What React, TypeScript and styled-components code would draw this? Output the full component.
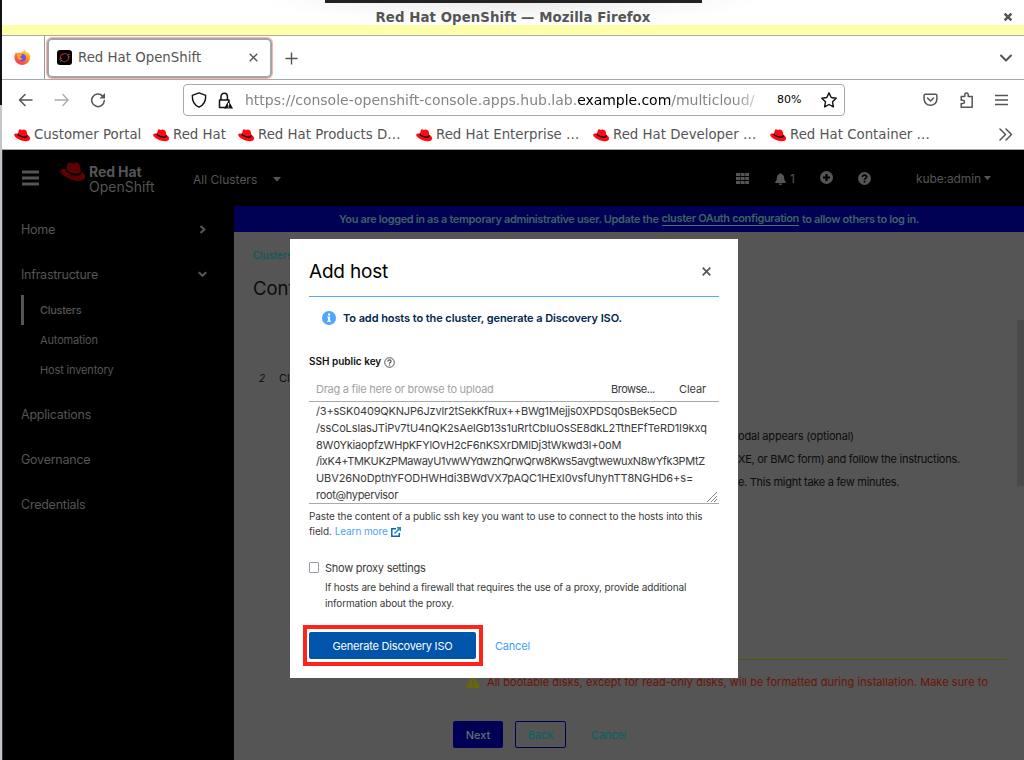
import React from 'react';
import styled, { createGlobalStyle, css } from 'styled-components';

const GlobalStyle = createGlobalStyle`
  *, *::before, *::after { box-sizing: border-box; }
  body { margin: 0; background: #fff; overflow: hidden; }
  svg { display: block; flex: none; }
`;

const chromeFont = '"DejaVu Sans", sans-serif';
const consoleFont = 'Inter, "Liberation Sans", sans-serif';
const dim = '#555';

/* ---------- desktop and window ---------- */

const Desktop = styled.div`
  position: relative;
  display: flex;
  width: 1024px;
  height: 760px;
  overflow: hidden;
  font-family: ${consoleFont};
`;
const DesktopEdge = styled.div`
  width: 2px;
  flex: none;
  background: linear-gradient(#101214 0 105px, #c4c8ca 105px 760px);
`;
const Window = styled.div`
  flex: 1;
  min-width: 0;
  display: flex;
  flex-direction: column;
`;
const DockShade = styled.div`
  position: absolute;
  left: 325px;
  top: 0;
  width: 377px;
  height: 3px;
  background: #222;
`;

/* ---------- browser chrome ---------- */

const TitleBar = styled.header`
  height: 36px;
  flex: none;
  display: flex;
  align-items: flex-start;
  padding: 8px 12px 0 20px;
  border-bottom: 1px solid #aaa;
  background:
    linear-gradient(#ffffaa, #ffffaa) 0 25px / 100% 10px no-repeat,
    radial-gradient(ellipse 250px 24px at 50% 0, #eaeaea, #fff) 0 0 / 100% 25px no-repeat;
  font: bold 13.33px/19px ${chromeFont};
  color: #555;
`;
const WindowTitle = styled.span`
  flex: 1;
  text-align: center;
  letter-spacing: 0.06px;
  white-space: nowrap;
`;
const CloseWindow = styled.div`
  padding-top: 5px;
`;

const TabBar = styled.nav`
  height: 44px;
  flex: none;
  display: flex;
  align-items: center;
  padding-right: 11px;
  border-bottom: 1px solid #aaa;
  background: #fff;
  font: 13.33px/20px ${chromeFont};
  color: #555;
`;
const PinnedTab = styled.div`
  width: 43px;
  height: 43px;
  display: flex;
  align-items: center;
  padding-left: 12px;
  border-right: 1px solid #999;
`;
const Tab = styled.div`
  width: 225px;
  height: 40px;
  margin-left: 2px;
  padding: 0 12px 0 8px;
  display: flex;
  align-items: center;
  border: 2px solid #a4a4a4;
  border-radius: 5px;
  box-shadow: 0 0 0 1px #fcb3ab;
`;
const TabLabel = styled.span`
  flex: 1;
  padding: 1px 0 0 6px;
  white-space: nowrap;
`;
const NewTab = styled.div`
  flex: 1;
  padding: 1px 0 0 13px;
`;

const Toolbar = styled.div`
  height: 40px;
  flex: none;
  display: flex;
  align-items: center;
  padding: 0 16px;
  background: #fff;
`;
const NavButtons = styled.div`
  width: 165px;
  display: flex;
  align-items: center;
  gap: 20px;
`;
const UrlBar = styled.div`
  width: 662px;
  height: 32px;
  display: flex;
  align-items: center;
  padding: 0 7px;
  border: 1px solid #aaa;
  border-radius: 4px;
  font: 14px/20px ${chromeFont};
  color: #858585;
`;
const Url = styled.span`
  width: 524px;
  padding-left: 12px;
  overflow: hidden;
  white-space: nowrap;
  mask-image: linear-gradient(90deg, #000 500px, #0006 522px);
`;
const Domain = styled.span`
  color: #000;
  letter-spacing: -0.05px;
`;
const Zoom = styled.span`
  width: 64px;
  padding-left: 20px;
  font-size: 11px;
  color: #000;
`;
const ToolbarIcons = styled.div`
  flex: 1;
  display: flex;
  justify-content: flex-end;
  align-items: center;
  gap: 21px;
`;

const Bookmarks = styled.div`
  height: 30px;
  flex: none;
  display: flex;
  align-items: center;
  padding: 0 11px 0 12px;
  border-bottom: 1px solid #aaa;
  background: #fff;
  color: #555;
  font: 13.33px/20px ${chromeFont};
`;
const Bookmark = styled.span<{ $w: number }>`
  width: ${p => p.$w}px;
  flex: none;
  display: flex;
  align-items: center;
  gap: 4px;
  white-space: nowrap;
`;
const BookmarkIcon = styled.span`
  padding-top: 2px;
`;
const Overflow = styled.span`
  flex: 1;
  display: flex;
  justify-content: flex-end;
`;

/* ---------- console ---------- */

const Console = styled.div`
  flex: 1;
  display: flex;
  flex-direction: column;
  background: #000;
  border-left: 1px solid #2c3236;
  color: ${dim};
`;
const Masthead = styled.header`
  height: 56px;
  flex: none;
  display: flex;
  align-items: center;
  padding: 0 33px 0 19px;
  font-size: 12px;
  white-space: nowrap;
`;
const Brand = styled.div`
  width: 154px;
  display: flex;
  align-items: flex-start;
  padding-left: 21px;
  gap: 4px;
`;
const BrandName = styled.div`
  padding-top: 3px;
  font-size: 14px;
  line-height: 14.5px;
`;
const BrandStrong = styled.div`
  font-weight: 700;
  letter-spacing: -0.1px;
`;
const ClusterSelect = styled.div`
  flex: 1;
  display: flex;
  align-items: center;
  gap: 16px;
  padding-top: 2px;
`;
const HeaderTools = styled.div`
  display: flex;
  align-items: center;
  padding-top: 1px;
`;
const HeaderTool = styled.div<{ $w: number; $up?: boolean }>`
  width: ${p => p.$w}px;
  display: flex;
  align-items: center;
  gap: 4px;
  padding-bottom: ${p => (p.$up ? 2 : 0)}px;
`;
const UserMenu = styled.div`
  display: flex;
  align-items: center;
  gap: 3px;
  letter-spacing: -0.1px;
`;

const Body = styled.div`
  flex: 1;
  min-height: 0;
  display: flex;
`;
const Sidebar = styled.nav`
  width: 231px;
  flex: none;
  padding-left: 18px;
  display: flex;
  flex-direction: column;
`;
const NavItem = styled.div`
  height: 45px;
  flex: none;
  display: flex;
  align-items: center;
  justify-content: space-between;
  padding: 1px 27px 0 0;
  font-size: 12.5px;
  letter-spacing: -0.24px;
`;
const SubNav = styled.div`
  display: flex;
  flex-direction: column;
  margin-top: -1px;
  padding: 0 0 6px;
`;
const SubItem = styled.div<{ $active?: boolean }>`
  height: 30px;
  display: flex;
  align-items: center;
  padding-left: 16px;
  border-left: 3px solid ${p => (p.$active ? dim : 'transparent')};
  font-size: 11px;
  letter-spacing: -0.15px;
  ${p => p.$active && css`font-weight: 500; letter-spacing: -0.3px;`}
`;

const Main = styled.main`
  flex: 1;
  min-width: 0;
  display: flex;
  flex-direction: column;
`;
const Banner = styled.div`
  height: 26px;
  flex: none;
  display: flex;
  justify-content: center;
  align-items: center;
  gap: 3px;
  background: #000055;
  color: #3e6262;
  font-weight: 600;
  font-size: 11px;
  letter-spacing: -0.36px;
  white-space: nowrap;
`;
const BannerLink = styled.span`
  border-bottom: 1px solid #5b6a6a;
  line-height: 13px;
`;
const Page = styled.div`
  flex: 1;
  display: flex;
  justify-content: space-between;
  background: #555;
  color: #0c0c0c;
  white-space: nowrap;
`;
const PageContent = styled.div`
  flex: 1;
  padding: 15px 10px 0 19px;
  display: flex;
  flex-direction: column;
`;
const Crumb = styled.div`
  font-size: 10px;
  line-height: 16px;
  color: #005a5a;
`;
const Heading = styled.div`
  padding-top: 14px;
  font-size: 18.5px;
  line-height: 22px;
`;
const Step = styled.div`
  display: flex;
  gap: 14px;
  padding: 70px 0 0 6px;
  font-size: 11px;
  line-height: 18px;
`;
const StepNumber = styled.span`
  width: 6px;
  font-style: italic;
  font-size: 10px;
`;
const Instructions = styled.div`
  padding: 38px 0 0 485px;
  display: flex;
  flex-direction: column;
  font-size: 11px;
  line-height: 23px;
`;
const Instruction = styled.span<{ $ls: number }>`
  letter-spacing: ${p => p.$ls}px;
`;
const Warning = styled.div`
  width: 541px;
  height: 44px;
  margin: 165px 0 0 213px;
  display: flex;
  align-items: center;
  gap: 7px;
  border-top: 1px solid #555500;
  font-size: 11px;
  letter-spacing: 0.05px;
  color: #6b1405;
`;
const WizardFooter = styled.div`
  display: flex;
  align-items: center;
  padding: 18px 0 0 200px;
  gap: 12px;
  color: #006464;
  font-size: 11px;
`;
const WizardButton = styled.div<{ $kind: 'primary' | 'outline' | 'link' }>`
  height: 27px;
  display: flex;
  align-items: center;
  justify-content: center;
  border-radius: 2px;
  width: ${p => (p.$kind === 'link' ? 61 : p.$kind === 'primary' ? 50 : 51)}px;
  ${p => p.$kind === 'primary' && css`background: #000055; color: #5f7272; font-weight: 500;`}
  ${p => p.$kind === 'outline' && css`border: 1px solid #000055;`}
  ${p => p.$kind === 'link' && css`letter-spacing: -0.2px;`}
`;
const ScrollThumb = styled.div`
  width: 7px;
  height: 166px;
  margin-top: 88px;
  background: #4a4a4a;
`;

/* ---------- add host dialog ---------- */

const Dialog = styled.section`
  position: absolute;
  left: 290px;
  top: 239px;
  width: 448px;
  height: 439px;
  padding: 0 19px;
  display: flex;
  flex-direction: column;
  background: #fff;
  color: #3a3a3a;
  font-size: 11px;
  white-space: nowrap;
`;
const DialogHeader = styled.div`
  height: 57px;
  flex: none;
  display: flex;
  align-items: center;
  justify-content: space-between;
  padding: 8px 8px 0 0;
`;
const DialogTitle = styled.h1`
  margin: 0;
  font-size: 19px;
  font-weight: 400;
  letter-spacing: -0.2px;
  color: #000;
`;
const InfoAlert = styled.div`
  height: 43px;
  flex: none;
  display: flex;
  align-items: center;
  gap: 7px;
  padding: 0 0 1px 13px;
  border-top: 1px solid #55aaff;
  font-weight: 600;
  letter-spacing: -0.08px;
  color: #00264d;
`;
const FieldLabel = styled.div`
  height: 35px;
  flex: none;
  display: flex;
  align-items: flex-end;
  gap: 3px;
  padding-bottom: 6px;
  font-size: 10px;
  line-height: 14px;
  font-weight: 600;
  color: #111;
`;
const FileRow = styled.div`
  height: 27px;
  flex: none;
  display: flex;
  align-items: center;
  padding-left: 7px;
  padding-top: 2px;
`;
const FilePlaceholder = styled.span`
  flex: 1;
  color: #a2a2a2;
  letter-spacing: -0.25px;
`;
const FileButton = styled.span<{ $w: number; $ls?: number }>`
  width: ${p => p.$w}px;
  letter-spacing: ${p => p.$ls ?? -0.1}px;
`;
const KeyArea = styled.div`
  position: relative;
  height: 103px;
  flex: none;
  padding: 1px 0 0 7px;
  border-top: 1px solid #aaa;
  border-bottom: 1px solid #aaa;
  line-height: 16.8px;
`;
const KeyLine = styled.div<{ $ls: number }>`
  letter-spacing: ${p => p.$ls}px;
`;
const ResizeGrip = styled.div`
  position: absolute;
  right: 2px;
  bottom: 1px;
`;
const HelpText = styled.div`
  padding-top: 5px;
  font-size: 10px;
  line-height: 15px;
  letter-spacing: -0.11px;
`;
const HelpLine = styled.div`
  display: flex;
  align-items: center;
  gap: 3px;
`;
const Link = styled.span`
  color: #4a9fff;
`;
const ProxyOption = styled.div`
  display: flex;
  gap: 6px;
  padding-top: 21px;
`;
const Checkbox = styled.div`
  width: 10px;
  height: 11px;
  margin-top: 2px;
  flex: none;
  border: 1px solid #999aa8;
  border-radius: 1px;
`;
const ProxyLabel = styled.div`
  line-height: 17px;
  letter-spacing: -0.25px;
`;
const ProxyHelp = styled.div`
  padding-top: 2px;
  font-size: 10px;
  line-height: 16px;
  letter-spacing: -0.14px;
`;
const DialogFooter = styled.div`
  display: flex;
  align-items: center;
  margin: 14px 0 0 -6px;
`;
const Highlight = styled.div`
  width: 180px;
  height: 41px;
  padding: 3px 2px;
  border: 4px solid #ff2419;
`;
const PrimaryButton = styled.div`
  width: 167px;
  height: 27px;
  display: flex;
  align-items: center;
  justify-content: center;
  border-radius: 2px;
  background: #0055aa;
  color: #fff;
  letter-spacing: -0.2px;
`;
const CancelLink = styled.span`
  padding-left: 12px;
  color: #3f9bff;
  letter-spacing: -0.2px;
`;

/* ---------- drawings ---------- */

const Hat = ({ w = 16, fill = '#ff0a14', band = '#000' }: { w?: number; fill?: string; band?: string }) => (
  <svg width={w} height={w * 0.8} viewBox="0 0 25 20">
    <path fill={fill} d="M6.2 7.2 7.6 2C8 .6 9 .2 10.4.8l1.8.8c1 0 1.4-1 3.2-1 2.4 0 4 1.6 4.6 4l1 4.6c3 1.4 4.6 3.8 4 6.4-.6 3-4.6 4-9 3.2C8.4 17.4 1.6 13.2.4 9.6-.2 7.4 2.6 6.8 6.2 7.2Z" />
    <path fill="none" stroke={band} strokeWidth="2" d="M6 7.6c.6 2.6 6.6 5 10.4 5.2 3 .1 4.4-.8 4.2-3" />
  </svg>
);

const line = { fill: 'none', strokeLinecap: 'round', strokeLinejoin: 'round' } as const;

const Caret = ({ w = 8 }: { w?: number }) => (
  <svg width={w} height={w * 0.6} viewBox="0 0 10 6"><path fill={dim} d="M0 0h10L5 6Z" /></svg>
);

const Firefox = () => (
  <svg width="17" height="17" viewBox="0 0 17 17">
    <defs>
      <linearGradient id="flame" x1="0.8" y1="0" x2="0.2" y2="1">
        <stop offset="0" stopColor="#ffef45" /><stop offset=".45" stopColor="#ff8a2a" /><stop offset="1" stopColor="#f62a5a" />
      </linearGradient>
    </defs>
    <path fill="url(#flame)" d="M11 .5c.3 1.500 1.500 2.500 2.400 3.400l.5-.9c1.600 1.600 2.400 3.500 2.400 5.600a8 8 0 0 1-15.900.4C.2 6.600 1 4.600 2.300 3l.4 1.500C3.700 3.900 5 3.600 6.300 4 7.800 3.400 9.500 2.500 11 .5Z" />
    <circle cx="8.200" cy="8.800" r="3.700" fill="#7a4be0" />
    <path fill="#ffa62b" d="M2.800 4.600c2-.4 4 .1 5.600 1.500L6.500 7.300c-.5 1.600.8 2.600 2.500 1.900-1 2.500-5 2.200-5.400-.8Z" />
  </svg>
);

const Favicon = () => (
  <svg width="15" height="15" viewBox="0 0 15 15">
    <rect width="15" height="15" rx="3" fill="#000" />
    <g {...line} strokeWidth="1.100"><path stroke="#d01c26" d="M3.500 8.500A4.200 4.200 0 0 1 10.800 5" /><path stroke="#8f2026" d="M11.600 6.500A4.200 4.200 0 0 1 4.200 10" /></g>
    <path stroke="#888" strokeWidth=".8" d="m2.300 9.300 2.400-1M10.200 5.300l2.500-1M3 11.300l2-.9M10.500 7.300l2-.8" />
  </svg>
);

const X = ({ size = 9, stroke = '#555', sw = 1.3 }: { size?: number; stroke?: string; sw?: number }) => (
  <svg width={size} height={size} viewBox="0 0 9 9"><path {...line} strokeLinecap="butt" stroke={stroke} strokeWidth={sw} d="m.7.7 7.600 7.600M8.300.7.7 8.300" /></svg>
);

const bookmarks: [string, number][] = [
  ['Customer Portal', 139],
  ['Red Hat', 85],
  ['Red Hat Products D…', 178],
  ['Red Hat Enterprise …', 177],
  ['Red Hat Developer …', 177],
  ['Red Hat Container …', 165],
];

const Browser = () => (
  <>
    <TitleBar>
      <WindowTitle>Red Hat OpenShift — Mozilla Firefox</WindowTitle>
      <CloseWindow><X size={8} sw={2.8} /></CloseWindow>
    </TitleBar>
    <TabBar>
      <PinnedTab><Firefox /></PinnedTab>
      <Tab>
        <Favicon />
        <TabLabel>Red Hat OpenShift</TabLabel>
        <X />
      </Tab>
      <NewTab>
        <svg width="13" height="13" viewBox="0 0 13 13"><path stroke="#555" strokeWidth="1.400" d="M6.500.5v12M.5 6.500h12" /></svg>
      </NewTab>
      <svg width="14" height="8" viewBox="0 0 14 8"><path {...line} stroke="#555" strokeWidth="2" d="m2 1.500 5 5 5-5" /></svg>
    </TabBar>
    <Toolbar>
      <NavButtons>
        <svg width="16" height="14" viewBox="0 0 16 14"><path {...line} stroke="#555" strokeWidth="1.500" d="M14 7H1.500M7 1.500 1.500 7 7 12.500" /></svg>
        <svg width="16" height="14" viewBox="0 0 16 14"><path {...line} stroke="#aaa" strokeWidth="1.300" d="M1 7h13M9 1.500 14 7 9 12.500" /></svg>
        <svg width="16" height="16" viewBox="0 0 16 16"><path {...line} stroke="#555" strokeWidth="1.500" d="M14.300 8.500A6.300 6.300 0 1 1 12.600 4" /><path fill="#555" d="M15 1v5.500H9.500Z" /></svg>
      </NavButtons>
      <UrlBar>
        <svg width="16" height="16" viewBox="0 0 16 16"><path {...line} stroke="#111" strokeWidth="1.400" d="M8 .9 14.700 3.300c.2 5.500-1.700 9.800-6.700 11.900C3 13.100 1.100 8.800 1.300 3.300Z" /></svg>
        <svg width="26" height="17" viewBox="0 0 26 17">
          <path {...line} stroke="#111" strokeWidth="1.500" d="M18 15.500h-5.500V8h9.500v1.500M14 8V4.500a3.200 3.200 0 0 1 6.400 0V8" />
          <path fill="#111" d="m21.500 8.500 4.500 8h-9Z" /><path stroke="#fff" strokeWidth="1.200" d="M21.500 11v2.800M21.500 14.500v1" />
        </svg>
        <Url>https://console-openshift-console.apps.hub.lab.<Domain>example.com</Domain>/multicloud/</Url>
        <Zoom>80%</Zoom>
        <svg width="16" height="16" viewBox="0 0 16 16"><path {...line} stroke="#111" strokeWidth="1.400" d="m8 .9 2.200 4.600 5 .7-3.700 3.500.9 5.200L8 12.500l-4.400 2.400.9-5.200L.8 6.200l5-.7Z" /></svg>
      </UrlBar>
      <ToolbarIcons>
        <svg width="15" height="14" viewBox="0 0 15 14"><path {...line} stroke="#555" strokeWidth="1.500" d="M2.500 1.200h10c.8 0 1.400.5 1.400 1.300V6c0 3.500-2.700 6.300-6.400 6.300S1.100 9.500 1.100 6V2.500c0-.8.6-1.300 1.400-1.300ZM4.500 5l3 3 3-3" /></svg>
        <svg width="15" height="16" viewBox="0 0 15 16"><path {...line} stroke="#555" strokeWidth="1.500" d="M5.800 4.500V2.800c0-2.500 3.400-2.500 3.400 0v1.700h4v10.700h-11V11.500h1.500c2.400 0 2.400-3.200 0-3.200H2.200V4.500Z" /></svg>
        <svg width="13" height="12" viewBox="0 0 13 12"><path stroke="#555" strokeWidth="1.300" d="M0 1.500h13M0 6h13M0 10.500h13" /></svg>
      </ToolbarIcons>
    </Toolbar>
    <Bookmarks>
      {bookmarks.map(([label, w]) => (
        <Bookmark key={label} $w={w}><BookmarkIcon><Hat /></BookmarkIcon>{label}</Bookmark>
      ))}
      <Overflow>
        <svg width="15" height="13" viewBox="0 0 15 13"><path {...line} stroke="#555" strokeWidth="1.500" d="m2 1 5.500 5.500L2 12M8 1l5.500 5.500L8 12" /></svg>
      </Overflow>
    </Bookmarks>
  </>
);

const ConsoleHeader = () => (
  <Masthead>
    <svg width="17" height="16" viewBox="0 0 17 16"><path stroke={dim} strokeWidth="3" d="M0 2h17M0 8h17M0 14h17" /></svg>
    <Brand>
      <Hat w={25} fill="#5c0002" band="#000" />
      <BrandName><BrandStrong>Red Hat</BrandStrong>OpenShift</BrandName>
    </Brand>
    <ClusterSelect>All Clusters<Caret /></ClusterSelect>
    <HeaderTools>
      <HeaderTool $w={39}>
        <svg width="13" height="11" viewBox="0 0 13 11"><path fill={dim} d="M0 0h4v3H0zM4.600 0h4v3h-4zM9.200 0H13v3H9.200zM0 4h4v3H0zM4.600 4h4v3h-4zM9.200 4H13v3H9.200zM0 8h4v3H0zM4.600 8h4v3h-4zM9.200 8H13v3H9.200z" /></svg>
      </HeaderTool>
      <HeaderTool $w={45}>
        <svg width="11" height="12" viewBox="0 0 11 12"><path fill={dim} d="M5.500 0c.6 0 .9.300.9.900C8.300 1.400 9.200 3 9.200 5c0 2 .6 2.900 1.500 3.700.5.500.2 1.300-.5 1.300H.8C.1 10-.2 9.200.3 8.700 1.200 7.900 1.800 7 1.800 5c0-2 .9-3.600 2.800-4.100 0-.6.300-.9.900-.9ZM4 10.500h3c0 2-3 2-3 0Z" /></svg>
        1
      </HeaderTool>
      <HeaderTool $w={38} $up>
        <svg width="13" height="13" viewBox="0 0 13 13"><circle cx="6.500" cy="6.500" r="6.500" fill={dim} /><path stroke="#000" strokeWidth="2.200" d="M6.500 3v7M3 6.500h7" /></svg>
      </HeaderTool>
      <HeaderTool $w={58}>
        <svg width="13" height="13" viewBox="0 0 13 13"><circle cx="6.500" cy="6.500" r="6.500" fill={dim} /><path fill="none" stroke="#000" strokeWidth="1.700" d="M4.400 5c0-2.600 4.200-2.400 4.200 0 0 1.400-2.100 1.300-2.100 2.800M6.500 8.800v1.600" /></svg>
      </HeaderTool>
      <UserMenu>kube:admin<Caret w={7} /></UserMenu>
    </HeaderTools>
  </Masthead>
);

const SideNav = () => (
  <Sidebar>
    <NavItem>Home
      <svg width="8" height="9" viewBox="0 0 8 9"><path fill="none" stroke={dim} strokeWidth="2.200" d="m1.500 1 3.800 3.500L1.500 8" /></svg>
    </NavItem>
    <NavItem>Infrastructure
      <svg width="9" height="7" viewBox="0 0 9 7"><path fill="none" stroke={dim} strokeWidth="2.200" d="m.8 1.200 3.700 3.500 3.700-3.500" /></svg>
    </NavItem>
    <SubNav>
      <SubItem $active>Clusters</SubItem>
      <SubItem>Automation</SubItem>
      <SubItem>Host inventory</SubItem>
    </SubNav>
    <NavItem>Applications</NavItem>
    <NavItem>Governance</NavItem>
    <NavItem>Credentials</NavItem>
  </Sidebar>
);

const WizardPage = () => (
  <Main>
    <Banner>
      <span>You are logged in as a temporary administrative user. Update the</span>
      <BannerLink>cluster OAuth configuration</BannerLink>
      <span>to allow others to log in.</span>
    </Banner>
    <Page>
      <PageContent>
        <Crumb>Clusters</Crumb>
        <Heading>Conf</Heading>
        <Step><StepNumber>2</StepNumber>Cl</Step>
        <Instructions>
          <Instruction $ls={-0.18}>odal appears (optional)</Instruction>
          <Instruction $ls={-0.27}>XE, or BMC form) and follow the instructions.</Instruction>
          <Instruction $ls={-0.29}>e. This might take a few minutes.</Instruction>
        </Instructions>
        <Warning>
          <svg width="14" height="12" viewBox="0 0 14 12"><path fill="#66660a" d="M7 0c.5 0 .8.200 1 .6l5.800 10c.4.700 0 1.400-.8 1.400H1c-.8 0-1.200-.7-.8-1.400L6 .6C6.200.2 6.500 0 7 0Z" /><path stroke="#555" strokeWidth="1.600" d="M7 3.500v4M7 8.700v1.600" /></svg>
          All bootable disks, except for read-only disks, will be formatted during installation. Make sure to
        </Warning>
        <WizardFooter>
          <WizardButton $kind="primary">Next</WizardButton>
          <WizardButton $kind="outline">Back</WizardButton>
          <WizardButton $kind="link">Cancel</WizardButton>
        </WizardFooter>
      </PageContent>
      <ScrollThumb />
    </Page>
  </Main>
);

const keyLines: [string, number][] = [
  ['/3+sSK0409QKNJP6Jzvlr2tSekKfRux++BWg1Mejjs0XPDSq0sBek5eCD', -0.18],
  ['/ssCoLslasJTiPv7tU4nQK2sAelGb13s1uRrtCbIuOsSE8dkL2TthEFfTeRD1I9kxq', -0.12],
  ['8W0YkiaopfzWHpKFYlOvH2cF6nKSXrDMlDj3tWkwd3l+0oM', -0.22],
  ['/ixK4+TMKUKzPMawayU1vwWYdwzhQrwQrw8Kws5avgtwewuxN8wYfk3PMtZ', -0.38],
  ['UBV26NoDpthYFODHWHdi3BWdVX7pAQC1HExI0vsfUhyhTT8NGHD6+s=', -0.1],
  ['root@hypervisor', -0.32],
];

const AddHostDialog = () => (
  <Dialog>
    <DialogHeader>
      <DialogTitle>Add host</DialogTitle>
      <X size={9} sw={1.7} />
    </DialogHeader>
    <InfoAlert>
      <svg width="14" height="14" viewBox="0 0 14 14"><circle cx="7" cy="7" r="7" fill="#4da6ff" /><path fill="#fff" d="M6 2.600h2.100v2H6zM5.300 5.500h2.800v4.200h.9V11H5.200V9.700H6V6.800h-.7z" /></svg>
      To add hosts to the cluster, generate a Discovery ISO.
    </InfoAlert>
    <FieldLabel>
      SSH public key
      <svg width="11" height="11" viewBox="0 0 11 11"><circle cx="5.500" cy="5.500" r="4.800" fill="none" stroke="#555" /><path fill="none" stroke="#555" strokeWidth="1.200" d="M3.900 4.400c0-2 3.200-1.900 3.200 0 0 1.100-1.600 1.100-1.600 2.300M5.500 7.500v1.200" /></svg>
    </FieldLabel>
    <FileRow>
      <FilePlaceholder>Drag a file here or browse to upload</FilePlaceholder>
      <FileButton $w={68} $ls={-0.5}>Browse...</FileButton>
      <FileButton $w={40}>Clear</FileButton>
    </FileRow>
    <KeyArea>
      {keyLines.map(([text, ls]) => <KeyLine key={text} $ls={ls}>{text}</KeyLine>)}
      <ResizeGrip>
        <svg width="10" height="10" viewBox="0 0 10 10"><path stroke="#888" strokeWidth="1" d="M0 10 10 0M4 10l6-6" /><path stroke="#7777b5" d="m7 10 3-3" /></svg>
      </ResizeGrip>
    </KeyArea>
    <HelpText>
      Paste the content of a public ssh key you want to use to connect to the hosts into this
      <HelpLine>
        field. <Link>Learn more</Link>
        <svg width="10" height="10" viewBox="0 0 10 10"><path fill="none" stroke="#0a63b8" strokeWidth="1.500" d="M5 1.700H.8v7.500h7.500V6" /><path fill="none" stroke="#1a8cb8" strokeWidth="1.500" d="M3.500 6.500 9 1M6 .8h3.300V4" /></svg>
      </HelpLine>
    </HelpText>
    <ProxyOption>
      <Checkbox />
      <div>
        <ProxyLabel>Show proxy settings</ProxyLabel>
        <ProxyHelp>
          If hosts are behind a firewall that requires the use of a proxy, provide additional
          <br />
          information about the proxy.
        </ProxyHelp>
      </div>
    </ProxyOption>
    <DialogFooter>
      <Highlight><PrimaryButton>Generate Discovery ISO</PrimaryButton></Highlight>
      <CancelLink>Cancel</CancelLink>
    </DialogFooter>
  </Dialog>
);

export default function App() {
  return (
    <>
      <GlobalStyle />
      <Desktop>
        <DesktopEdge />
        <Window>
          <Browser />
          <Console>
            <ConsoleHeader />
            <Body>
              <SideNav />
              <WizardPage />
            </Body>
          </Console>
        </Window>
        <DockShade />
        <AddHostDialog />
      </Desktop>
    </>
  );
}
